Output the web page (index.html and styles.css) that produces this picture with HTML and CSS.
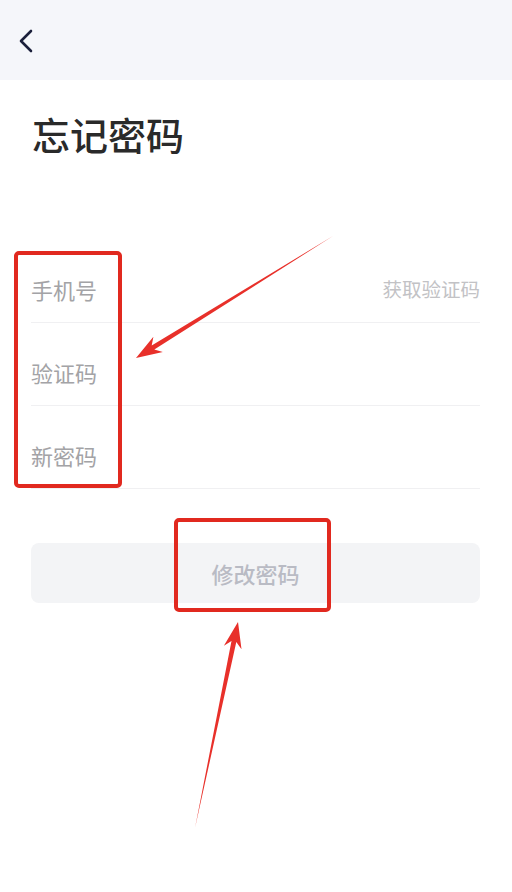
FILE: index.html
```html
<!DOCTYPE html>
<html lang="zh-CN">
<head>
    <meta charset="UTF-8">
    <meta name="viewport" content="width=device-width, initial-scale=1.0">
    <title>忘记密码</title>
    <link rel="stylesheet" href="styles.css">
</head>
<body>
    <!-- Top bar -->
    <div class="topbar">
        <svg class="back" width="16" height="24" viewBox="0 0 16 24">
            <path d="M13 2 L3 12 L13 22" fill="none" stroke="#1b1f3b" stroke-width="2.6" stroke-linecap="round" stroke-linejoin="round"/>
        </svg>
    </div>

    <h1 class="title">忘记密码</h1>

    <!-- Form -->
    <div class="form">
        <div class="row">
            <span class="label">手机号</span>
            <span class="code-link">获取验证码</span>
        </div>
        <div class="row">
            <span class="label">验证码</span>
        </div>
        <div class="row">
            <span class="label">新密码</span>
        </div>
        <div class="submit">修改密码</div>
    </div>

    <!-- Red markup drawn over the screenshot -->
    <svg class="marks" width="512" height="892" viewBox="0 0 512 892">
        <rect x="16" y="253" width="104" height="233" rx="3" fill="none" stroke="#e1291f" stroke-width="4"/>
        <rect x="176" y="520" width="153" height="90" rx="3" fill="none" stroke="#e1291f" stroke-width="4"/>
        <polygon points="333,236 154.3,349.6 162.8,352 136,358 153.4,336.7 151.7,345.4" fill="#e8302a"/>
        <polygon points="195,828 236.3,642.1 241.5,649.3 238,622 223.9,645.7 231.5,641.1" fill="#e8302a"/>
    </svg>
</body>
</html>
```

FILE: styles.css
```css
/* Page */
body {
    margin: 0;
    background: #fff;
    font-family: "Noto Sans CJK SC", "Noto Sans", sans-serif;
    position: relative;
    min-height: 892px;
}
.topbar {
    height: 80px;
    background: #f5f6fa;
    display: flex;
    align-items: center;
    padding-left: 18px;
}
.back {
    display: block;
    margin-top: 2px;
}
.title {
    margin: 35px 0 0 32px;
    font-size: 38px;
    line-height: 38px;
    font-weight: 500;
    color: #2a2a2a;
}

/* Form rows */
.form {
    margin-top: 87px;
    padding: 0 32px 0 31px;
}
.row {
    display: flex;
    justify-content: space-between;
    align-items: center;
    padding: 38px 0 22px;
    line-height: 22px;
    border-bottom: 1px solid #f0f0f2;
}
.label {
    font-size: 22px;
    color: #a3a3a6;
}
.code-link {
    font-size: 19.5px;
    color: #c2c2c5;
}
.submit {
    margin-top: 54px;
    height: 60px;
    border-radius: 8px;
    background: #f3f4f6;
    display: flex;
    align-items: center;
    justify-content: center;
    font-size: 22px;
    font-weight: 500;
    color: #b9bbc4;
}

/* Annotation layer */
.marks {
    position: absolute;
    left: 0;
    top: 0;
    pointer-events: none;
}
```
